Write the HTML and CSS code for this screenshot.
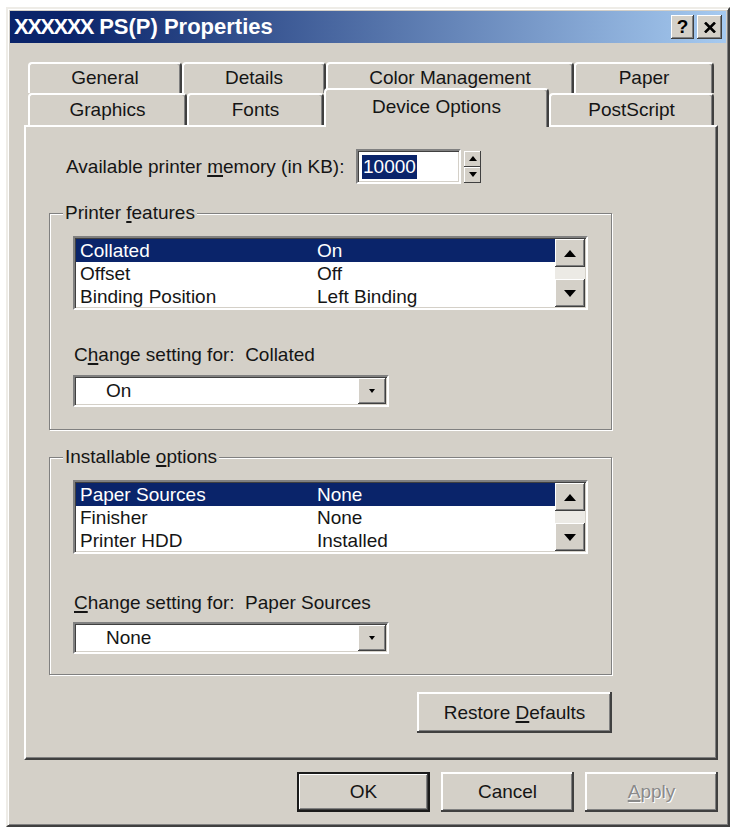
FILE: index.html
```html
<!DOCTYPE html>
<html>
<head>
<meta charset="utf-8">
<title>Properties</title>
<link rel="stylesheet" href="styles.css">
</head>
<body>
<div class="window">
  <div class="titlebar">
    <span class="title"><span class="xs">XXXXXX</span> PS(P) Properties</span>
    <span class="tbtn help">?</span>
    <span class="tbtn close"><svg width="12" height="11" viewBox="0 0 12 11"><path d="M1 0.5 L11 10.5 M11 0.5 L1 10.5" stroke="#000" stroke-width="2.6"/></svg></span>
  </div>
  <div class="content">
    <div class="tabs">
      <div class="tabrow back">
        <div class="tab w-general">General</div>
        <div class="tab w-details">Details</div>
        <div class="tab w-color">Color Management</div>
        <div class="tab w-paper">Paper</div>
      </div>
      <div class="tabrow front">
        <div class="tab w-graphics">Graphics</div>
        <div class="tab w-fonts">Fonts</div>
        <div class="tab w-device selected">Device Options</div>
        <div class="tab w-postscript">PostScript</div>
      </div>
    </div>
    <div class="panel">
      <div class="memrow">
        <span class="memlabel">Available printer <u>m</u>emory (in KB):</span>
        <div class="field mem"><span class="hl">10000</span></div>
        <div class="spin">
          <span class="spinbtn"><svg width="8" height="5" viewBox="0 0 8 5"><path d="M4 0 L8 5 H0 Z" fill="#000"/></svg></span>
          <span class="spinbtn"><svg width="8" height="5" viewBox="0 0 8 5"><path d="M0 0 H8 L4 5 Z" fill="#000"/></svg></span>
        </div>
      </div>

      <div class="group g1">
        <div class="legend">Printer <u>f</u>eatures</div>
        <div class="listbox">
          <div class="rows">
            <div class="row sel"><span>Collated</span><span>On</span></div>
            <div class="row"><span>Offset</span><span>Off</span></div>
            <div class="row"><span>Binding Position</span><span>Left Binding</span></div>
          </div>
          <div class="vscroll">
            <span class="sbtn"><svg width="12" height="7" viewBox="0 0 12 7"><path d="M6 0 L12 7 H0 Z" fill="#000"/></svg></span>
            <span class="track"></span>
            <span class="sbtn"><svg width="12" height="7" viewBox="0 0 12 7"><path d="M0 0 H12 L6 7 Z" fill="#000"/></svg></span>
          </div>
        </div>
        <div class="change">C<u>h</u>ange setting for:&nbsp; Collated</div>
        <div class="combo">
          <span class="cval">On</span>
          <span class="cbtn"><svg width="6" height="4" viewBox="0 0 6 4"><path d="M0 0 H6 L3 4 Z" fill="#000"/></svg></span>
        </div>
      </div>

      <div class="group g2">
        <div class="legend">Installable <u>o</u>ptions</div>
        <div class="listbox">
          <div class="rows">
            <div class="row sel"><span>Paper Sources</span><span>None</span></div>
            <div class="row"><span>Finisher</span><span>None</span></div>
            <div class="row"><span>Printer HDD</span><span>Installed</span></div>
          </div>
          <div class="vscroll">
            <span class="sbtn"><svg width="12" height="7" viewBox="0 0 12 7"><path d="M6 0 L12 7 H0 Z" fill="#000"/></svg></span>
            <span class="track"></span>
            <span class="sbtn"><svg width="12" height="7" viewBox="0 0 12 7"><path d="M0 0 H12 L6 7 Z" fill="#000"/></svg></span>
          </div>
        </div>
        <div class="change"><u>C</u>hange setting for:&nbsp; Paper Sources</div>
        <div class="combo">
          <span class="cval">None</span>
          <span class="cbtn"><svg width="6" height="4" viewBox="0 0 6 4"><path d="M0 0 H6 L3 4 Z" fill="#000"/></svg></span>
        </div>
      </div>

      <button class="btn restore">Restore <u>D</u>efaults</button>
    </div>
    <div class="actions">
      <button class="btn default">OK</button>
      <button class="btn">Cancel</button>
      <button class="btn disabled"><u>A</u>pply</button>
    </div>
  </div>
</div>
</body>
</html>
```

FILE: styles.css
```css
* { box-sizing: border-box; }
html, body { margin: 0; padding: 0; }
body {
  background: #fff;
  font-family: "Liberation Sans", Arial, sans-serif;
  font-size: 19px;
  color: #151515;
}
u { text-underline-offset: 2px; text-decoration-thickness: 1.5px; }

.window {
  margin: 7px 0 0 6px;
  width: 724px;
  height: 820px;
  background: #d4d0c8;
  border: 2px solid;
  border-color: #eeece7 #404040 #404040 #eeece7;
  box-shadow: inset 1px 1px #fff, inset -1px -1px #808080;
  padding: 2px;
  display: flex;
  flex-direction: column;
}

.titlebar {
  height: 32px;
  display: flex;
  align-items: center;
  padding: 0 4px 0 4px;
  background: linear-gradient(90deg, #0a246a 0%, #0a246a 8%, #a6caf0 100%);
}
.title {
  flex: 1;
  color: #fff;
  font-weight: bold;
  font-size: 22px;
  white-space: nowrap;
}
.xs { letter-spacing: -1.5px; }
.tbtn {
  width: 23px;
  height: 24px;
  margin-left: 3px;
  display: flex;
  align-items: center;
  justify-content: center;
  background: #d4d0c8;
  box-shadow: inset -1px -1px #404040, inset 1px 1px #fff, inset -2px -2px #808080;
  font-weight: bold;
  font-size: 19px;
  color: #000;
}
.close { width: 25px; }

.content {
  flex: 1;
  padding: 19px 8px 0 14px;
  display: flex;
  flex-direction: column;
}

.tabs { margin-left: 4px; width: 686px; }
.tabrow { display: flex; }
.tabrow.back { height: 31px; }
.tabrow.front { height: 32px; align-items: flex-start; }
.tab {
  height: 100%;
  display: flex;
  align-items: center;
  justify-content: center;
  background: #d4d0c8;
  border-top: 2px solid #fff;
  border-left: 2px solid #fff;
  border-right: 2px solid #404040;
  border-radius: 4px 4px 0 0;
  box-shadow: inset -1px 0 #808080;
  padding-bottom: 1px;
}
.tabrow.front .tab { height: 32px; }
.w-general { width: 154px; }
.w-details { width: 144px; }
.w-color { width: 248px; }
.w-paper { width: 140px; }
.w-graphics { width: 159px; }
.w-fonts { width: 137px; }
.w-device { width: 225px; }
.w-postscript { width: 165px; }
.tab.selected {
  position: relative;
  z-index: 2;
  margin-top: -5px;
  height: 39px;
  padding-bottom: 3px;
}
.tabrow.front .tab.selected { height: 39px; }

.panel {
  width: 694px;
  height: 635px;
  border: 2px solid;
  border-color: #fff #404040 #404040 #fff;
  box-shadow: inset -1px -1px #808080;
  padding: 22px 0 0 23px;
  display: flex;
  flex-direction: column;
  align-items: flex-start;
}

.memrow {
  display: flex;
  align-items: center;
  margin-left: 17px;
  height: 35px;
}
.memlabel { width: 290px; white-space: nowrap; }
.field {
  background: #fff;
  border: 2px solid;
  border-color: #808080 #fff #fff #808080;
  box-shadow: inset 1px 1px #404040, inset -1px -1px #d4d0c8;
}
.mem {
  width: 105px;
  height: 35px;
  padding: 0 0 0 4px;
  display: flex;
  align-items: center;
}
.hl {
  background: #0a246a;
  color: #fff;
  padding: 0 1px;
  line-height: 24px;
}
.spin {
  margin-left: 3px;
  width: 17px;
  height: 32px;
  display: flex;
  flex-direction: column;
}
.spinbtn {
  flex: 1;
  display: flex;
  align-items: center;
  justify-content: center;
  background: #d4d0c8;
  box-shadow: inset -1px -1px #404040, inset 1px 1px #fff;
}

.group {
  width: 563px;
  border: 1px solid #808080;
  box-shadow: inset 1px 1px #fff, 1px 1px #fff;
  display: flex;
  flex-direction: column;
  align-items: flex-start;
}
.g1 { margin-top: 29px; height: 217px; }
.g2 { margin-top: 27px; height: 218px; }
.legend {
  margin: -12px 0 0 13px;
  padding: 0 2px;
  line-height: 22px;
  background: #d4d0c8;
  white-space: nowrap;
}

.listbox {
  margin: 12px 0 0 23px;
  width: 515px;
  height: 74px;
  background: #fff;
  border: 2px solid;
  border-color: #808080 #fff #fff #808080;
  box-shadow: inset 1px 1px #404040, inset -1px -1px #d4d0c8;
  padding: 1px;
  display: flex;
  overflow: hidden;
}
.rows { flex: 1; overflow: hidden; }
.row {
  height: 23px;
  line-height: 23px;
  display: grid;
  grid-template-columns: 237px 1fr;
  padding-left: 4px;
  white-space: nowrap;
}
.row.sel { background: #0a246a; color: #fff; }
.vscroll {
  width: 30px;
  display: flex;
  flex-direction: column;
  background: #eceae5;
}
.sbtn {
  height: 28px;
  display: flex;
  align-items: center;
  justify-content: center;
  background: #d4d0c8;
  box-shadow: inset -1px -1px #404040, inset 1px 1px #fff, inset -2px -2px #808080;
}
.track { flex: 1; }

.change { margin-left: 24px; line-height: 22px; white-space: nowrap; }
.g1 .change { margin-top: 34px; }
.g2 .change { margin-top: 38px; }
.combo {
  margin: 9px 0 0 23px;
  width: 316px;
  height: 32px;
  background: #fff;
  border: 2px solid;
  border-color: #808080 #fff #fff #808080;
  box-shadow: inset 1px 1px #404040, inset -1px -1px #d4d0c8;
  padding: 1px;
  display: flex;
}
.g2 .combo { margin-top: 8px; }
.cval {
  flex: 1;
  padding-left: 30px;
  display: flex;
  align-items: center;
}
.cbtn {
  width: 28px;
  display: flex;
  align-items: center;
  justify-content: center;
  background: #d4d0c8;
  box-shadow: inset -1px -1px #404040, inset 1px 1px #fff, inset -2px -2px #808080;
}

.btn {
  font: inherit;
  color: #151515;
  background: #d4d0c8;
  border: 0;
  padding: 0;
  box-shadow: inset -2px -2px #404040, inset 2px 2px #fff, inset -3px -3px #808080;
}
.restore {
  margin: 17px 0 0 368px;
  width: 195px;
  height: 41px;
}
.actions {
  display: flex;
  justify-content: flex-end;
  gap: 11px;
  margin-top: 12px;
}
.actions .btn { width: 133px; height: 40px; }
.btn.default {
  border: 2px solid #1a1a1a;
  box-shadow: inset -1px -1px #404040, inset 1px 1px #fff, inset -2px -2px #808080;
}
.btn.disabled {
  color: #8a8a8a;
  text-shadow: 1px 1px #fff;
}
```
